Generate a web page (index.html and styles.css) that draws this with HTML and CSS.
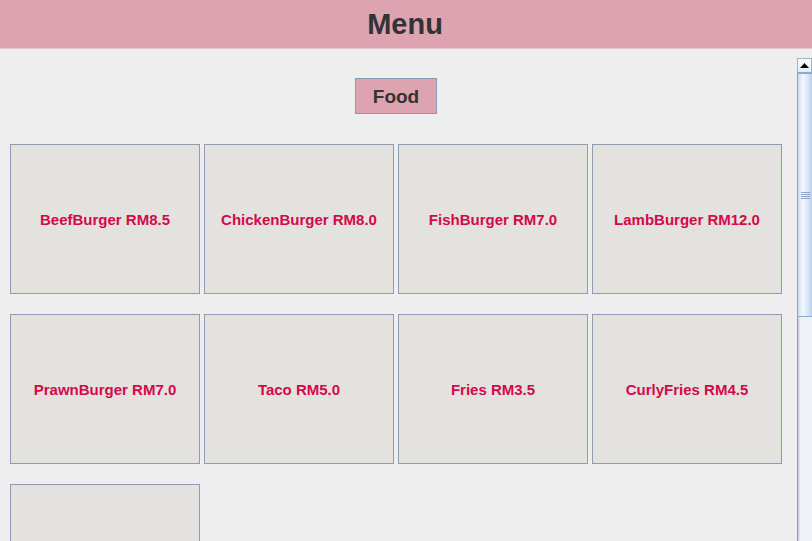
FILE: index.html
```html
<!DOCTYPE html>
<html>
<head>
<meta charset="utf-8">
<link rel="stylesheet" href="styles.css">
</head>
<body>
<header class="header"><h1 class="title">Menu</h1></header>
<div class="main">
  <div class="viewport">
    <div class="content">
      <div class="tabs"><button class="tab">Food</button></div>
      <div class="grid">
        <div class="card">BeefBurger RM8.5</div>
        <div class="card">ChickenBurger RM8.0</div>
        <div class="card">FishBurger RM7.0</div>
        <div class="card">LambBurger RM12.0</div>
        <div class="card">PrawnBurger RM7.0</div>
        <div class="card">Taco RM5.0</div>
        <div class="card">Fries RM3.5</div>
        <div class="card">CurlyFries RM4.5</div>
        <div class="card"></div>
      </div>
    </div>
  </div>
  <div class="scrollbar">
    <div class="sb-up"><svg width="9" height="5" viewBox="0 0 9 5"><path d="M0 5 L4.5 0 L9 5 Z" fill="#000"/></svg></div>
    <div class="sb-thumb"><div class="grip"><span></span><span></span><span></span><span></span></div></div>
    <div class="sb-track"></div>
  </div>
</div>
</body>
</html>
```
FILE: styles.css
```css
html, body {
  margin: 0;
  padding: 0;
  height: 100%;
  overflow: hidden;
  background: #eeeeee;
  font-family: "Liberation Sans", Arial, sans-serif;
}
.header {
  height: 48px;
  background: #dda3b1;
  border-bottom: 1px solid #e6c9d0;
  display: flex;
  align-items: center;
  justify-content: center;
}
.title {
  margin: 0;
  font-size: 29px;
  font-weight: bold;
  color: #333333;
  letter-spacing: 0;
  transform: translateX(-1px);
}
.main {
  display: flex;
  height: calc(100% - 49px);
  padding-top: 9px;
  box-sizing: border-box;
}
.viewport {
  flex: 1;
  overflow: hidden;
}
.content {
  width: 772px;
  padding-left: 10px;
}
.tabs {
  display: flex;
  justify-content: center;
  padding-top: 20px;
  margin-bottom: 30px;
}
.tab {
  width: 82px;
  height: 36px;
  margin: 0;
  padding: 2px 0 0;
  background: #dda3b1;
  border: 1px solid #8a9bb0;
  font-family: "Liberation Sans", Arial, sans-serif;
  font-size: 19px;
  font-weight: bold;
  color: #333333;
}
.grid {
  display: grid;
  grid-template-columns: repeat(4, 190px);
  grid-auto-rows: 150px;
  column-gap: 4px;
  row-gap: 20px;
}
.card {
  box-sizing: border-box;
  background: #e4e2de;
  border: 1px solid #8d9caf;
  display: flex;
  align-items: center;
  justify-content: center;
  font-size: 15px;
  font-weight: bold;
  color: #d3094b;
}
.scrollbar {
  width: 15px;
  display: flex;
  flex-direction: column;
}
.sb-up {
  height: 15px;
  box-sizing: border-box;
  border: 1px solid #a3b0c0;
  border-bottom-color: #8fa8d0;
  background: linear-gradient(#fbfcfe, #e6ebf2);
  display: flex;
  align-items: center;
  justify-content: center;
}
.sb-thumb {
  height: 244px;
  box-sizing: border-box;
  border: 1px solid #8aa6d3;
  border-right: none;
  background: linear-gradient(90deg, #c9dbf1 0%, #f4f8fd 35%, #dbe7f6 70%, #b8cfec 100%);
  display: flex;
  align-items: center;
  justify-content: center;
}
.grip {
  display: flex;
  flex-direction: column;
  gap: 1px;
}
.grip span {
  display: block;
  width: 9px;
  height: 1px;
  background: #8fa4cc;
}
.sb-track {
  flex: 1;
  box-sizing: border-box;
  border-left: 1px solid #7ea0d0;
  background: linear-gradient(90deg, #c3d4ec 0px, #c3d4ec 1px, #eef1f5 2px, #eef1f5 100%);
}
```
